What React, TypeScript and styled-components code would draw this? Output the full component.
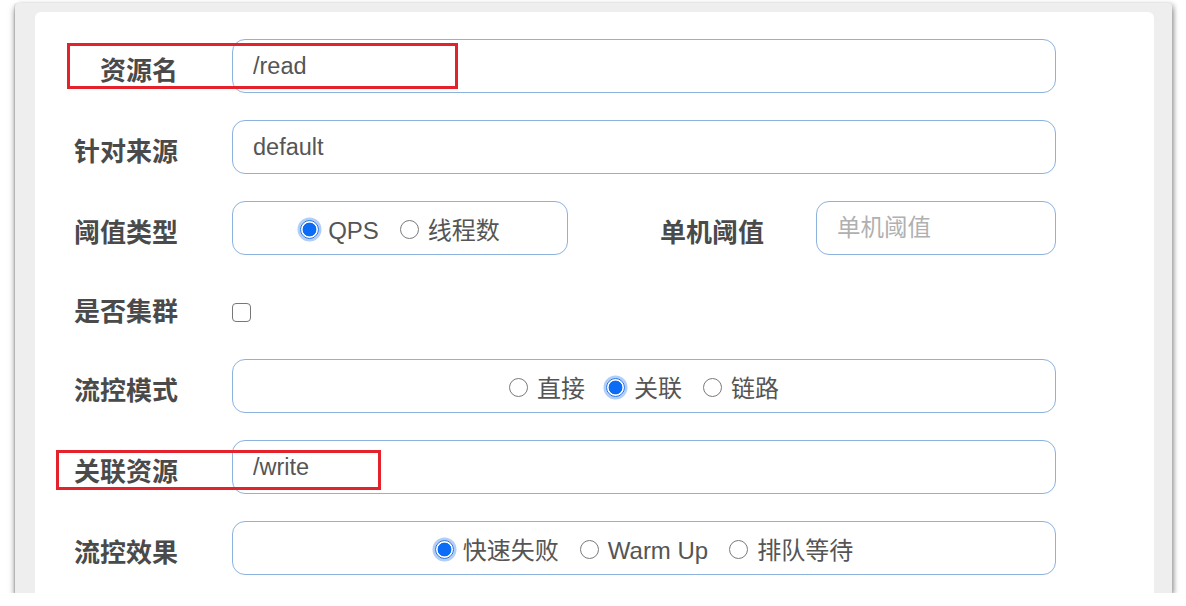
import React from "react";
import styled, { createGlobalStyle, css } from "styled-components";

const GlobalStyle = createGlobalStyle`
  html, body { margin: 0; padding: 0; background: #ffffff; }
  body { font-family: "Liberation Sans", "Noto Sans CJK SC", sans-serif; }
  * { box-sizing: border-box; }
`;

const Frame = styled.div`
  margin: 3px 0 0 15px;
  width: 1157px;
  height: 590px;
  background: #eeeeee;
  border-radius: 4px 4px 0 0;
  padding: 9px 18px 0 20px;
  box-shadow: 0 4px 6px rgba(0, 0, 0, 0.5), 3px 0 4px rgba(0, 0, 0, 0.12),
    -1px 0 1px rgba(0, 0, 0, 0.1);
`;

const Card = styled.div`
  height: 100%;
  background: #ffffff;
  border-radius: 6px 6px 0 0;
  padding-top: 27px;
  display: flex;
  flex-direction: column;
  gap: 27px;
`;

const Row = styled.div<{ $h?: number }>`
  position: relative;
  display: flex;
  align-items: center;
  height: ${(p) => p.$h ?? 54}px;
`;

const Label = styled.div<{ $w?: number; $pr?: number }>`
  width: ${(p) => p.$w ?? 197}px;
  padding-right: ${(p) => p.$pr ?? 54}px;
  padding-top: 6px;
  text-align: right;
  font-family: "Noto Sans CJK SC", "Liberation Sans", sans-serif;
  font-weight: 700;
  font-size: 26px;
  line-height: 30px;
  color: #4a4a4a;
  flex: none;
`;

const boxLook = css`
  height: 54px;
  border: 1.5px solid #8cb2de;
  border-radius: 13px;
  background: #fff;
`;

const TextField = styled.input<{ $w?: number }>`
  ${boxLook};
  width: ${(p) => p.$w ?? 824}px;
  padding: 0 20px;
  font-family: "Liberation Sans", "Noto Sans CJK SC", sans-serif;
  font-size: 23.5px;
  color: #555;
  outline: none;
  &::placeholder {
    color: #b0b0b0;
    font-family: "Noto Sans CJK SC", sans-serif;
  }
`;

const RadioBox = styled.div<{ $w?: number }>`
  ${boxLook};
  width: ${(p) => p.$w ?? 824}px;
  display: flex;
  justify-content: center;
  align-items: center;
  gap: 21px;
  padding-top: 6px;
`;

const RadioItem = styled.label`
  display: inline-flex;
  align-items: center;
  gap: 9px;
  font-family: "Liberation Sans", "Noto Sans CJK SC", sans-serif;
  font-size: 24px;
  line-height: 28px;
  color: #555;
`;

const Dot = styled.span<{ $on?: boolean }>`
  width: 19px;
  height: 19px;
  border-radius: 50%;
  flex: none;
  margin-top: -4px;
  border: 1.5px solid #7a7a7a;
  background: #fff;
  ${(p) =>
    p.$on &&
    css`
      border-color: #1b6fe8;
      background: radial-gradient(circle, #0b6cf6 0 55%, #ffffff 60%);
      box-shadow: 0 0 0 2.5px #b2cdf6;
    `}
`;

const CheckBox = styled.span`
  width: 19px;
  height: 19px;
  border: 1.5px solid #777;
  border-radius: 4px;
  margin-top: 10px;
  background: #fff;
`;

const Mark = styled.div<{ $l: number; $t: number; $w: number; $h: number }>`
  position: absolute;
  left: ${(p) => p.$l}px;
  top: ${(p) => p.$t}px;
  width: ${(p) => p.$w}px;
  height: ${(p) => p.$h}px;
  border: 3px solid #e4222b;
  pointer-events: none;
`;

type Opt = { label: string; on?: boolean };

const Radios: React.FC<{ opts: Opt[]; w?: number }> = ({ opts, w }) => (
  <RadioBox $w={w}>
    {opts.map((o) => (
      <RadioItem key={o.label}>
        <Dot $on={o.on} />
        {o.label}
      </RadioItem>
    ))}
  </RadioBox>
);

export default function App() {
  return (
    <>
      <GlobalStyle />
      <Frame>
        <Card>
          <Row>
            <Label>资源名</Label>
            <TextField readOnly value="/read" />
            <Mark $l={32} $t={4} $w={391} $h={46} />
          </Row>
          <Row>
            <Label>针对来源</Label>
            <TextField readOnly value="default" />
          </Row>
          <Row>
            <Label>阈值类型</Label>
            <Radios w={336} opts={[{ label: "QPS", on: true }, { label: "线程数" }]} />
            <Label $w={248} $pr={52}>
              单机阈值
            </Label>
            <TextField $w={240} placeholder="单机阈值" />
          </Row>
          <Row $h={50}>
            <Label>是否集群</Label>
            <CheckBox />
          </Row>
          <Row>
            <Label>流控模式</Label>
            <Radios opts={[{ label: "直接" }, { label: "关联", on: true }, { label: "链路" }]} />
          </Row>
          <Row>
            <Label>关联资源</Label>
            <TextField readOnly value="/write" />
            <Mark $l={21} $t={10} $w={325} $h={40} />
          </Row>
          <Row>
            <Label>流控效果</Label>
            <Radios
              opts={[{ label: "快速失败", on: true }, { label: "Warm Up" }, { label: "排队等待" }]}
            />
          </Row>
        </Card>
      </Frame>
    </>
  );
}
